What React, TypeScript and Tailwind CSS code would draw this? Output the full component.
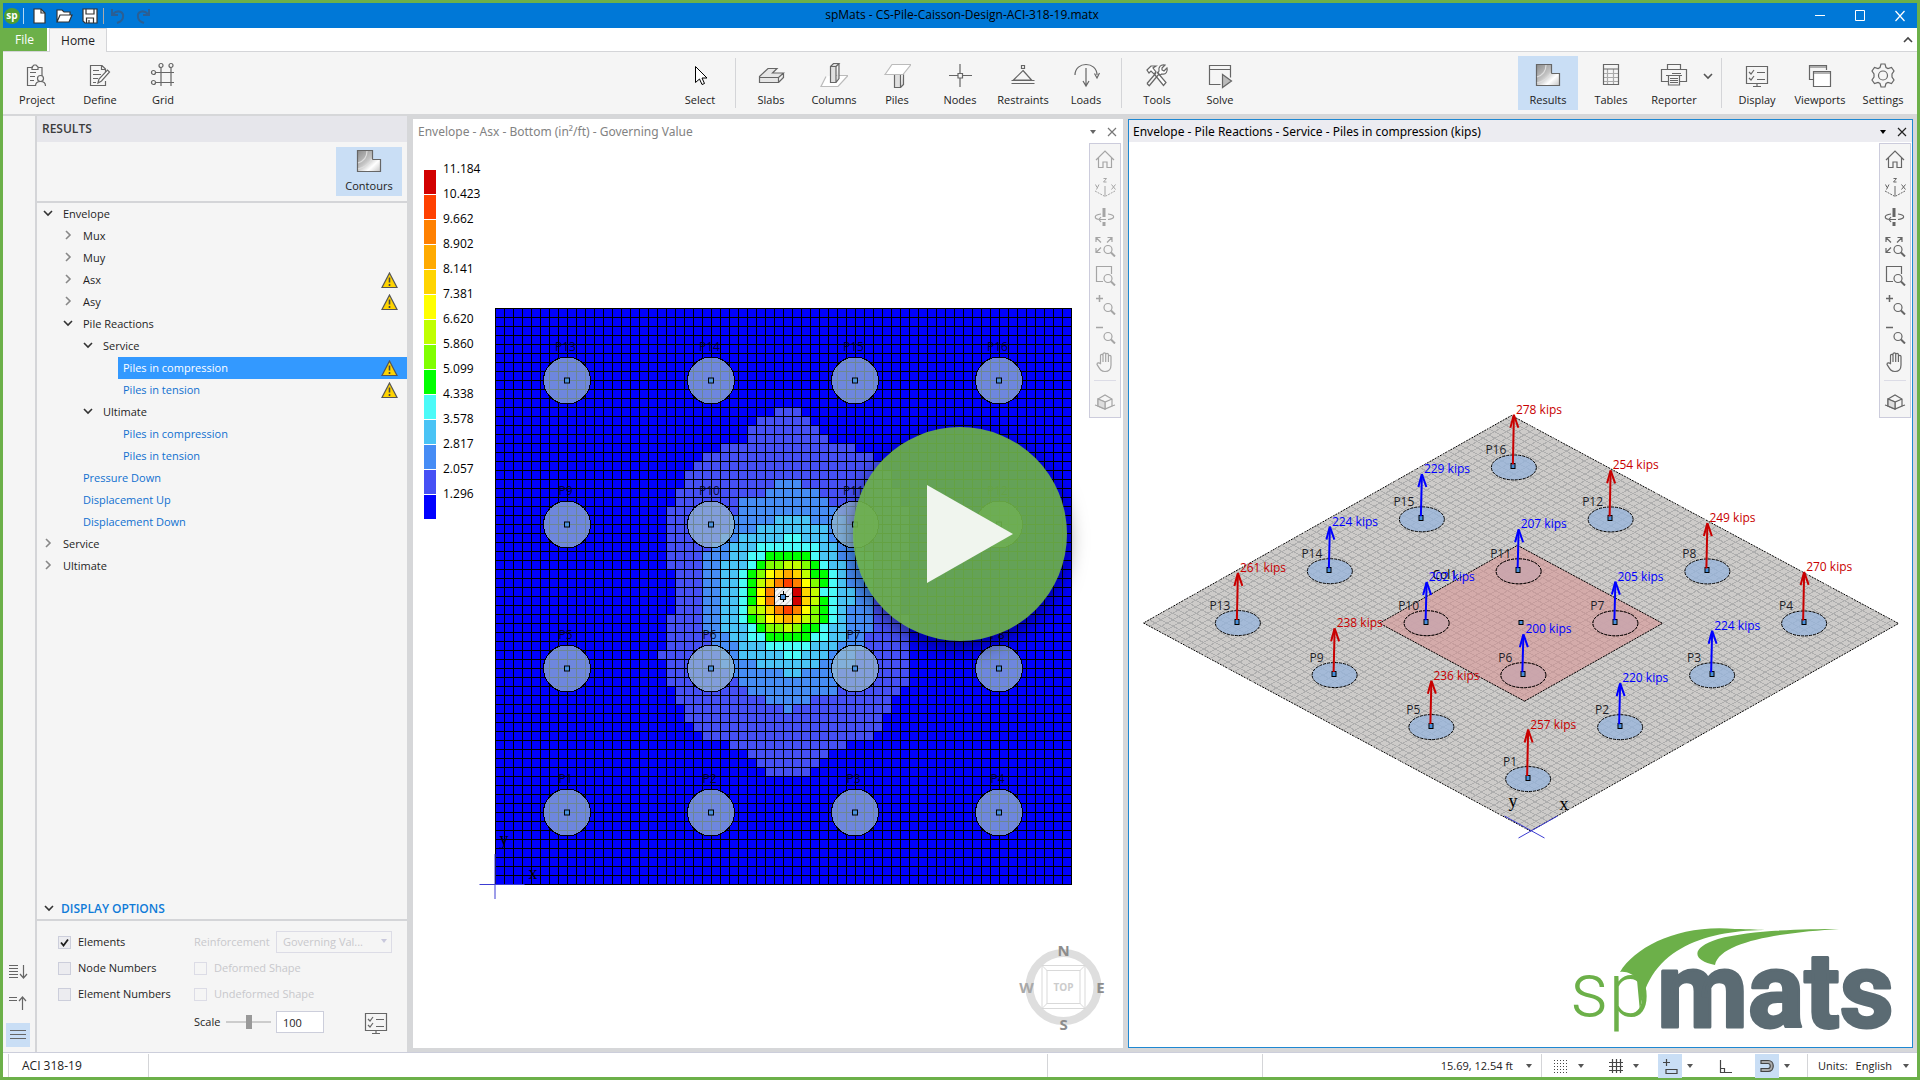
import { useState } from "react";
import type { ReactNode } from "react";

/* ---------- data ---------- */

const LEGEND = [
  { value: "11.184", color: "#d20000" },
  { value: "10.423", color: "#ff4000" },
  { value: "9.662", color: "#ff8000" },
  { value: "8.902", color: "#ffaa00" },
  { value: "8.141", color: "#ffd400" },
  { value: "7.381", color: "#ffff00" },
  { value: "6.620", color: "#bfff00" },
  { value: "5.860", color: "#80ff00" },
  { value: "5.099", color: "#00ff00" },
  { value: "4.338", color: "#4bfaf8" },
  { value: "3.578", color: "#4ac3f5" },
  { value: "2.817", color: "#468cf5" },
  { value: "2.057", color: "#4650f5" },
  { value: "1.296", color: "#0000ff" },
];

type Band = { color: string; row: number; spans: [number, number][] };

// each span is [first column, end column) of one mesh row, starting at `row`
const BANDS: Band[] = [
  {
    color: "#4650f5",
    row: 11,
    spans: [
      [31, 34], [29, 35], [28, 36], [28, 37], [25, 40], [23, 42], [22, 43], [21, 44], [21, 44],
      [20, 45], [20, 45], [19, 46], [19, 46], [19, 46], [19, 46], [19, 46], [19, 46], [19, 45],
      [20, 45], [20, 45], [20, 45], [20, 45], [20, 45], [19, 46], [19, 46], [19, 46], [19, 46],
      [18, 46], [19, 46], [19, 46], [19, 46], [20, 45], [20, 44], [21, 44], [21, 43], [22, 43],
      [23, 42], [26, 39], [28, 37], [29, 36], [30, 35],
    ],
  },
  {
    color: "#468cf5",
    row: 19,
    spans: [
      [31, 34], [30, 36], [27, 37], [27, 38], [26, 39], [26, 40], [25, 40], [24, 41], [23, 42],
      [23, 42], [23, 42], [23, 42], [23, 42], [23, 42], [23, 42], [23, 42], [23, 42], [24, 41],
      [24, 41], [25, 40], [25, 40], [26, 38], [27, 38], [28, 38], [30, 35], [32, 33],
    ],
  },
  {
    color: "#4ac3f5",
    row: 23,
    spans: [
      [31, 35], [29, 37], [27, 37], [26, 38], [26, 38], [25, 39], [25, 39], [25, 39], [25, 40],
      [25, 40], [25, 39], [25, 39], [25, 39], [26, 39], [27, 38], [27, 37], [29, 36], [32, 34],
    ],
  },
  {
    color: "#4bfaf8",
    row: 25,
    spans: [
      [32, 34], [29, 36], [28, 36], [28, 37], [27, 38], [27, 38], [27, 38], [27, 38], [27, 38],
      [27, 38], [28, 37], [28, 37], [30, 35], [32, 34],
    ],
  },
];

// cells around the column, rows 27-36 and columns 28-36
const CORE = [
  "..ggggg..",
  ".gllyylg.",
  "glYoOoygg",
  "gyorRrYlg",
  "gYrwwXoy.",
  "gYrwwXoyg",
  "lyorRrYlg",
  "glYoOoylg",
  ".gllylgg.",
  "..ggggg..",
];
const CORE_COLORS: Record<string, string> = {
  g: "#00ff00",
  l: "#80ff00",
  y: "#bfff00",
  Y: "#ffff00",
  o: "#ffd400",
  O: "#ffaa00",
  r: "#ff8000",
  R: "#ff4000",
  X: "#d20000",
  w: "#f5f5f5",
};

// kips for P1..P16, row by row from the origin
const REACTIONS = [257, 220, 224, 270, 236, 200, 205, 249, 238, 202, 207, 254, 261, 224, 229, 278];

type TreeRow = { label: string; depth: number; open?: boolean; link?: boolean; warn?: boolean };

const TREE: TreeRow[] = [
  { label: "Envelope", depth: 0, open: true },
  { label: "Mux", depth: 1, open: false },
  { label: "Muy", depth: 1, open: false },
  { label: "Asx", depth: 1, open: false, warn: true },
  { label: "Asy", depth: 1, open: false, warn: true },
  { label: "Pile Reactions", depth: 1, open: true },
  { label: "Service", depth: 2, open: true },
  { label: "Piles in compression", depth: 3, link: true, warn: true },
  { label: "Piles in tension", depth: 3, link: true, warn: true },
  { label: "Ultimate", depth: 2, open: true },
  { label: "Piles in compression", depth: 3, link: true },
  { label: "Piles in tension", depth: 3, link: true },
  { label: "Pressure Down", depth: 1, link: true },
  { label: "Displacement Up", depth: 1, link: true },
  { label: "Displacement Down", depth: 1, link: true },
  { label: "Service", depth: 0, open: false },
  { label: "Ultimate", depth: 0, open: false },
];
const INDENT = ["pl-1", "pl-6", "pl-11", "pl-16"];

/* ---------- icons ---------- */

function Icon({ children, size = 28, color = "#666" }: { children: ReactNode; size?: number; color?: string }) {
  return (
    <svg width={size} height={size} viewBox={`0 0 ${size} ${size}`} fill="none" stroke={color} strokeWidth="1.2" aria-hidden="true" className="shrink-0">
      {children}
    </svg>
  );
}

function Chevron({ dir, color = "#333" }: { dir: "down" | "right" | "up"; color?: string }) {
  const d = dir === "down" ? "M3 4l4 4 4-4" : dir === "up" ? "M3 9l4-4 4 4" : "M5 2l4 4-4 4";
  return (
    <Icon size={14} color={color}>
      <path d={d} strokeWidth="1.6" />
    </Icon>
  );
}

function Caret({ color = "#555" }: { color?: string }) {
  return (
    <svg width="8" height="8" viewBox="0 0 8 8" aria-hidden="true" className="shrink-0">
      <path d="M1 2h6L4 6z" fill={color} />
    </svg>
  );
}

function Warning() {
  return (
    <svg width="17" height="17" viewBox="0 0 17 17" aria-hidden="true" className="shrink-0">
      <path d="M8.500 1L16 15.500H1z" fill="#ffd400" stroke="#555" strokeWidth="1.200" />
      <path d="M8.500 5.500v5M8.500 12v2" stroke="#444" strokeWidth="1.600" />
    </svg>
  );
}

const contourIcon = (
  <Icon>
    <defs>
      <linearGradient id="steel" x1="0" y1="0" x2="1" y2="1">
        <stop offset="0" stopColor="#8c8c8c" />
        <stop offset="0.45" stopColor="#c4c4c4" />
        <stop offset="0.7" stopColor="#fff" />
        <stop offset="1" stopColor="#c4c4c4" />
      </linearGradient>
    </defs>
    <path d="M2.500 3.500h15v9h8v12h-23z" fill="url(#steel)" />
    <path d="M12 4c0 6-3 10-9 12M17 12c-2 4-7 8-14 10" stroke="#ddd" />
  </Icon>
);

const displayIcon = (
  <Icon>
    <path d="M3.500 5.500h21v17h-21zM10 25.500h8M14 23v2" />
    <path d="M6 11l2 2 3-4M6 17l2 2 3-4M14 11.500h8M14 18.500h8" />
  </Icon>
);

const RIBBON_ICONS: Record<string, ReactNode> = {
  Project: (
    <Icon>
      <path d="M10 6.500H4.500v18H13M15 6.500h4V15M9 8.500V6l2-2h2l2 2v2.500zM7 11.500h6M7 15.500h5M7 19.500h4" />
      <circle cx="17.500" cy="17.500" r="3" />
      <path d="M12.500 25c0-3 2-4.500 5-4.500s5 1.500 5 4.500" />
    </Icon>
  ),
  Define: (
    <Icon>
      <path d="M19.500 20v4.500h-15v-20H16l3.500 3.500v3M15.500 4.500v4h4M7 9.500h6M7 13.500h8M7 17.500h5M7 21.500h3" />
      <path d="M12 22l1-4 8.500-9 2 2-8 9z" fill="#fff" />
    </Icon>
  ),
  Grid: (
    <Icon>
      <path d="M6.500 11.500H25M6.500 21.500H25M12 6.500V25M22 6.500V25" />
      <circle cx="12" cy="4.500" r="2" />
      <circle cx="22" cy="4.500" r="2" />
      <circle cx="4.500" cy="11.500" r="2" />
      <circle cx="4.500" cy="21.500" r="2" />
    </Icon>
  ),
  Select: (
    <Icon color="#000">
      <path d="M9.500 5.500v16l4-3.500 2.500 5.500 2.500-1-2.500-5.500h5z" fill="#fff" strokeWidth="1" />
    </Icon>
  ),
  Slabs: (
    <Icon>
      <path d="M2.500 15.500L11 7.500h9l-4.500 4.500h11l-5 4.500v5h-19z M2.500 16.500h19M26.500 12v4.500l-5 5" fill="#e6e6e6" />
    </Icon>
  ),
  Columns: (
    <Icon>
      <path d="M6 15.500L1 25.500h17l10-11H14" stroke="#bbb" fill="#fff" />
      <path d="M10.500 5.500h5.500v16h-5.500zM10.500 5.500l3-3H19l-3 3M19 2.500v15l-3 4" fill="#e0e0e0" />
    </Icon>
  ),
  Piles: (
    <Icon>
      <path d="M11.500 12.500h6v14h-6zM17.500 26.500l3-3v-11" fill="#e0e0e0" />
      <path d="M2 13.500l7-10h19l-8 10z" stroke="#bbb" fill="#fff" />
    </Icon>
  ),
  Nodes: (
    <Icon>
      <path d="M14 3v9M14 17v9M3 14.500h9M16.500 14.500H26M12 12.500h4.500V17H12z" />
    </Icon>
  ),
  Restraints: (
    <Icon>
      <path d="M12.500 4.500h3v3h-3zM14 9.500L22.500 19h-18zM2.500 19.500h23M2.500 22.500h23" />
    </Icon>
  ),
  Loads: (
    <Icon>
      <path d="M3 14C3 0 25 0 25 14M14 7v17M11 20l3 5 3-5M22.500 12.500l2.500 4.500 2.500-5" />
    </Icon>
  ),
  Tools: (
    <Icon>
      <path d="M6 25l10-12M4 22.500l9-10.500M4 22.500L6.500 25M14 11l9 10.500-2.500 3L12 14" fill="#fff" />
      <path d="M4 9l4-4h5l-3 2 3 4-2 2-3-3-2 2zM24 7l-3 3-2-1V7l3-3c-4-1-7 2-6 6l-1 2 2 2 2-1c4 1 6-3 5-6z" fill="#fff" />
    </Icon>
  ),
  Solve: (
    <Icon>
      <path d="M14.500 23.500h-11v-19h21v12M3.500 8.500h21" />
      <path d="M16.500 13.500v13l9-6.500z" fill="#bbb" />
    </Icon>
  ),
  Results: contourIcon,
  Tables: (
    <Icon>
      <path d="M10.500 8v15M16.500 8v15M6 12.500h16M6 16.500h16M6 20.500h16" stroke="#aaa" />
      <path d="M6.500 3.500h15v20h-15zM6.500 8h15" />
    </Icon>
  ),
  Reporter: (
    <Icon>
      <path d="M7.500 8.500v-5h13v5M8 20.500H1.500v-12h25v12H20M6 14.500h16M12 12.500h9" />
      <path d="M8.500 14.500h11v9.500h-11zM10 17.500h8M10 19.500h8M10 21.500h8" />
    </Icon>
  ),
  Display: displayIcon,
  Viewports: (
    <Icon>
      <path d="M7 18.500H3.500v-14h17V9M3.500 6h17" />
      <path d="M7.500 10.500h17v15h-17zM7.500 12h17" fill="#fff" />
    </Icon>
  ),
  Settings: (
    <Icon>
      <path d="M12 3h4l1 3.500 2 1 3.500-1 2.500 3.500-2 3v3l2 3-2.500 3.500-3.500-1-2 1-1 3.500h-4l-1-3.500-2-1-3.500 1L3 19l2-3v-3l-2-3 2.500-3.500 3.500 1 2-1z" />
      <circle cx="14" cy="14.500" r="4.500" />
    </Icon>
  ),
};

const magnifier = (
  <>
    <circle cx="14" cy="14.500" r="4" />
    <path d="M17 17.500l4 4" strokeWidth="2" />
  </>
);

const VIEW_TOOLS: { name: string; icon: ReactNode }[] = [
  { name: "Home view", icon: <path d="M2 12l9-9 9 9M4.500 10v9.500h4.500V14h4v5.500h4.500V10" /> },
  {
    name: "Axes",
    icon: (
      <>
        <path d="M9.500 1.500h3L9.500 5h3M1.500 7.500L3 10.500M5 7.500L2.500 12.500M17.500 7.500l4 5M21.500 7.500l-4 5M11 9v10" strokeWidth="1" />
        <path d="M1 14l10 5.500L21 14" strokeDasharray="2 1" strokeWidth="1" />
      </>
    ),
  },
  {
    name: "Rotate",
    icon: (
      <>
        <path d="M10 2v9M10 16v4" strokeWidth="3" />
        <path d="M7 8C-1 9 0 13 6 13.500h6M14 8c8 1 7 5 0 5.500M7 11l-2 2.500L7 16" />
      </>
    ),
  },
  {
    name: "Zoom extents",
    icon: (
      <>
        <path d="M2 7V2.500h4.500M2 2.500l5 5M18 7V2.500h-4.500M18 2.500l-5 5M2 13v4.500h4.500M2 17.500l5-5" />
        {magnifier}
      </>
    ),
  },
  {
    name: "Zoom window",
    icon: (
      <>
        <path d="M9 17.500H2.500v-15h15V10" />
        {magnifier}
      </>
    ),
  },
  {
    name: "Zoom in",
    icon: (
      <>
        <path d="M2 5.500h7M5.500 2v7" strokeWidth="1.500" />
        {magnifier}
      </>
    ),
  },
  {
    name: "Zoom out",
    icon: (
      <>
        <path d="M2 5.500h7" strokeWidth="1.500" />
        {magnifier}
      </>
    ),
  },
  {
    name: "Pan",
    icon: (
      <path d="M6.500 12V4.500c0-1.500 2.500-1.500 2.500 0V11V3c0-1.500 2.700-1.500 2.700 0v8V3.500c0-1.500 2.700-1.500 2.700 0V11V5.500c0-1.500 2.600-1.500 2.600 0V14c0 4-2 6.500-6 6.500-4 0-5-2-8-7 0-2 2-2 4-.5" />
    ),
  },
];

/* ---------- ribbon ---------- */

function RibbonButton({ name, active = false }: { name: string; active?: boolean }) {
  return (
    <button
      type="button"
      aria-pressed={active}
      className={
        "flex h-[54px] w-[60px] flex-col items-center gap-[3px] whitespace-nowrap pt-[5px] text-[11px] leading-4 text-[#222] " +
        (active ? "bg-[#c9def5]" : "hover:bg-[#e3ecf7]")
      }
    >
      {RIBBON_ICONS[name]}
      {name}
    </button>
  );
}

function Divider() {
  return <div className="mx-[2px] h-[50px] w-px bg-[#d4d5d8]" />;
}

function TitleBar() {
  return (
    <header className="grid h-[25px] grid-cols-[1fr_auto_1fr] items-center bg-[#0078d7] text-black">
      <div className="flex items-center pl-px">
        <span className="flex h-4 w-4 items-center justify-center rounded-full bg-[#4f9e2f] pb-[2px] text-[10px] leading-none font-bold text-white">sp</span>
        <span className="mx-[3px] h-4 w-px bg-white/70" />
        <button type="button" aria-label="New" className="flex w-[25px] justify-center">
          <Icon size={18} color="#333"><path d="M3 2h7l4 4v10H3z" fill="#fff" /><path d="M10 2v4h4" /></Icon>
        </button>
        <button type="button" aria-label="Open" className="flex w-[25px] justify-center">
          <Icon size={18} color="#333"><path d="M1 15V3h5l2 2h6v3M1 15L4 8h12l-3 7z" fill="#fff" /></Icon>
        </button>
        <button type="button" aria-label="Save" className="flex w-[25px] justify-center">
          <Icon size={18} color="#333"><path d="M2 2h14v14H4l-2-2z" fill="#fff" /><path d="M5 2v5h8V2M5.500 16v-5h7v5M8 13v3" /></Icon>
        </button>
        <span className="mx-px h-4 w-px bg-[#aaa]" />
        <button type="button" aria-label="Undo" className="flex w-[25px] justify-center">
          <Icon size={18} color="#2a5f94"><path d="M3 2v6h6M4 7c5-5 11-2 10 3 0 3-3 5-6 6" strokeWidth="2" /></Icon>
        </button>
        <button type="button" aria-label="Redo" className="flex w-[25px] justify-center">
          <Icon size={18} color="#2a5f94"><path d="M15 2v6H9M14 7C9 2 3 5 4 10c0 3 3 5 6 6" strokeWidth="2" /></Icon>
        </button>
      </div>
      <h1 className="pb-px pl-1 text-xs">spMats - CS-Pile-Caisson-Design-ACI-318-19.matx</h1>
      <div className="flex items-center justify-end gap-[6px]">
        <button type="button" aria-label="Minimize" className="flex w-[34px] justify-center"><Icon size={14} color="#fff"><path d="M2 6.500h10" strokeWidth="1" /></Icon></button>
        <button type="button" aria-label="Maximize" className="flex w-[34px] justify-center"><Icon size={14} color="#fff"><path d="M2.500 1.500h9v10h-9z" strokeWidth="1" /></Icon></button>
        <button type="button" aria-label="Close" className="flex w-[34px] justify-center"><Icon size={14} color="#fff"><path d="M2.500 2l9 10M11.500 2l-9 10" /></Icon></button>
      </div>
    </header>
  );
}

function Ribbon() {
  return (
    <>
      <nav className="flex h-6 border-b border-[#d4d5d8] bg-white">
        <button type="button" className="w-[44px] bg-[#6cb049] pr-px text-white">File</button>
        <button type="button" className="-mb-px ml-[2px] w-[58px] border border-b-0 border-[#d4d5d8] bg-[#f5f5f5] text-[#222]">Home</button>
        <button type="button" aria-label="Collapse ribbon" className="ml-auto pr-[2px]"><Chevron dir="up" color="#444" /></button>
      </nav>
      <div className="grid h-[62px] shrink-0 grid-cols-[1fr_auto_1fr] items-center bg-[#f5f5f5] px-1">
        <div className="flex items-center gap-[3px]">
          <RibbonButton name="Project" />
          <RibbonButton name="Define" />
          <RibbonButton name="Grid" />
        </div>
        <div className="flex items-center gap-[3px]">
          <RibbonButton name="Select" />
          <Divider />
          <RibbonButton name="Slabs" />
          <RibbonButton name="Columns" />
          <RibbonButton name="Piles" />
          <RibbonButton name="Nodes" />
          <RibbonButton name="Restraints" />
          <RibbonButton name="Loads" />
          <Divider />
          <RibbonButton name="Tools" />
          <RibbonButton name="Solve" />
        </div>
        <div className="flex items-center justify-end gap-[3px]">
          <RibbonButton name="Results" active />
          <RibbonButton name="Tables" />
          <div className="flex">
            <RibbonButton name="Reporter" />
            <button type="button" aria-label="Reporter options" className="flex w-3 items-center justify-center pr-[4px] pb-[12px]"><Chevron dir="down" color="#555" /></button>
          </div>
          <Divider />
          <RibbonButton name="Display" />
          <RibbonButton name="Viewports" />
          <RibbonButton name="Settings" />
        </div>
      </div>
    </>
  );
}

/* ---------- left panel ---------- */

function LeftRail() {
  return (
    <div className="flex w-[32px] shrink-0 flex-col items-center justify-end gap-2 bg-[#f5f5f5] pr-[2px] pb-[5px]">
      <button type="button" aria-label="Expand all" className="flex h-6 w-6 items-center justify-center">
        <Icon size={20}><path d="M1 4.500h9M1 7.500h9M1 10.500h9M1 13.500h9M1 16.500h9M15.500 4v13M12 13l3.500 4 3.500-4" /></Icon>
      </button>
      <button type="button" aria-label="Collapse all" className="flex h-6 w-6 items-center justify-center">
        <Icon size={20}><path d="M1 4.500h8M1 7.500h8M14.500 17V4M11 8l3.500-4 3.500 4" /></Icon>
      </button>
      <button type="button" aria-label="Tree view" className="flex h-6 w-6 items-center justify-center bg-[#c9def5]">
        <Icon size={20}><path d="M2 5.500h16M2 9.500h16M2 13.500h16" /></Icon>
      </button>
    </div>
  );
}

function Check({ label, checked = false, disabled = false }: { label: string; checked?: boolean; disabled?: boolean }) {
  const [on, setOn] = useState(checked);
  return (
    <label className={"flex h-[26px] items-center gap-[7px] whitespace-nowrap " + (disabled ? "text-[#c8c8cc]" : "text-[#1e1e1e]")}>
      <span className="relative h-[13px] w-[13px]">
        <input
          type="checkbox"
          checked={on}
          disabled={disabled}
          onChange={() => setOn(!on)}
          className="block h-[13px] w-[13px] appearance-none border border-[#cccedb] bg-[#ececf0] disabled:border-[#dcdce6] disabled:bg-[#f5f5f5]"
        />
        {on && (
          <svg viewBox="0 0 13 13" className="pointer-events-none absolute inset-0" fill="none" stroke="#1e1e1e" strokeWidth="1.8" aria-hidden="true">
            <path d="M3 6.500l2.500 3L10 3.500" />
          </svg>
        )}
      </span>
      <span className="pt-px">{label}</span>
    </label>
  );
}

function ResultsPanel() {
  const [selected, setSelected] = useState(7);
  const [scale, setScale] = useState(100);
  return (
    <aside className="flex w-[372px] shrink-0 flex-col border-l-2 border-[#d4d5d8] bg-[#f5f5f5] text-[11px]">
      <h2 className="h-[26px] bg-[#e6e6eb] pl-[5px] text-xs leading-[26px] font-semibold text-[#3c3c3c]">RESULTS</h2>
      <div className="flex h-[61px] justify-end border-b-2 border-[#d4d5d8] pt-[5px] pr-[5px]">
        <button type="button" className="flex h-[49px] w-[66px] flex-col items-center bg-[#c9def5] leading-4 text-[#222]">
          {contourIcon}
          <span className="mt-[3px]">Contours</span>
        </button>
      </div>
      <ul>
        {TREE.map((row, i) => {
          const isSelected = i === selected;
          return (
            <li key={i} className={"flex h-[22px] items-center pr-[10px] " + INDENT[row.depth]}>
              {row.open !== undefined ? (
                <button type="button" aria-label={"Toggle " + row.label} className="pb-px">
                  <Chevron dir={row.open ? "down" : "right"} color={row.open ? "#333" : "#888"} />
                </button>
              ) : (
                <span className="w-[14px]" />
              )}
              <span
                className={
                  "-mr-[10px] ml-[3px] flex h-full flex-1 items-center justify-between pr-[9px] pl-[5px] " +
                  (isSelected ? "bg-[#3399ff] text-white" : row.link ? "text-[#1070d0]" : "text-[#1e1e1e]")
                }
              >
                {row.link ? (
                  <a href="#" onClick={() => setSelected(i)} className="pt-px">
                    {row.label}
                  </a>
                ) : (
                  <span className="pt-px">{row.label}</span>
                )}
                {row.warn && <Warning />}
              </span>
            </li>
          );
        })}
      </ul>

      <section className="mt-auto">
        <h3 className="flex h-[24px] items-center gap-[5px] border-b-2 border-[#d4d5d8] pt-[2px] pl-[5px] text-xs font-semibold text-[#0f7bd8]">
          <Chevron dir="down" />
          DISPLAY OPTIONS
        </h3>
        <div className="flex h-[131px] pt-2 pl-[21px]">
          <div className="w-[136px]">
            <Check label="Elements" checked />
            <Check label="Node Numbers" />
            <Check label="Element Numbers" />
          </div>
          <div>
            <div className="flex h-[26px] items-center text-[#c8c8cc]">
              <label htmlFor="reinforcement" className="w-[82px] pt-px">Reinforcement</label>
              <span className="relative">
                <select id="reinforcement" disabled className="block h-[22px] w-[116px] appearance-none border border-[#dcdce6] bg-transparent pl-[6px] opacity-100">
                  <option>Governing Val...</option>
                </select>
                <span className="pointer-events-none absolute top-[6px] right-[4px]"><Caret color="#c8c8dc" /></span>
              </span>
            </div>
            <Check label="Deformed Shape" disabled />
            <Check label="Undeformed Shape" disabled />
            <div className="flex h-[30px] items-center text-[#1e1e1e]">
              <label htmlFor="scale" className="w-[32px] pt-px">Scale</label>
              <input
                type="range"
                aria-label="Scale slider"
                min={0}
                max={200}
                value={scale}
                onChange={(e) => setScale(Number(e.target.value))}
                className="h-[14px] w-[45px] appearance-none bg-transparent [&::-webkit-slider-runnable-track]:h-[2px] [&::-webkit-slider-runnable-track]:bg-[#ccc] [&::-webkit-slider-thumb]:-mt-[6px] [&::-webkit-slider-thumb]:h-[14px] [&::-webkit-slider-thumb]:w-[6px] [&::-webkit-slider-thumb]:appearance-none [&::-webkit-slider-thumb]:bg-[#999]"
              />
              <input
                id="scale"
                value={scale}
                onChange={(e) => setScale(Number(e.target.value) || 0)}
                className="ml-[5px] h-[22px] w-[48px] border border-[#cccedb] bg-white pl-[6px]"
              />
              <button type="button" aria-label="Display settings" className="ml-[38px]">{displayIcon}</button>
            </div>
          </div>
        </div>
      </section>
    </aside>
  );
}

/* ---------- viewports ---------- */

function ViewToolbar({ dim }: { dim: boolean }) {
  const color = dim ? "#a5a5a5" : "#666";
  return (
    <div className="absolute top-px right-px flex w-[32px] flex-col items-center gap-[7px] border border-[#ccccdc] bg-[#f5f5f5] pt-[4px] pb-[4px]">
      {VIEW_TOOLS.map((tool) => (
        <button key={tool.name} type="button" aria-label={tool.name}>
          <Icon size={22} color={color}>{tool.icon}</Icon>
        </button>
      ))}
      <span className="h-px w-[22px] bg-[#dcdce6]" />
      <button type="button" aria-label="Isometric view" className="pt-[3px]">
        <Icon size={22} color={color}>
          <path d="M4 8l7-4 7 4v7l-7 3-7-3zM4 8l7 3 7-3M11 11v7" />
          <path d="M4 8l7 3v7l-7-3z" fill="#ddd" />
          <path d="M1 14l3 1M18 15l3-1" />
        </Icon>
      </button>
    </div>
  );
}

function Viewport({ title, active = false, children }: { title: ReactNode; active?: boolean; children: ReactNode }) {
  return (
    <section className={"flex min-w-0 flex-col border bg-white " + (active ? "border-[#1e88d2]" : "border-white")}>
      <div className={"flex h-[22px] shrink-0 items-center pt-px pl-[4px] " + (active ? "bg-[#ececf1] text-black" : "text-[#828282]")}>
        <h2 className="truncate font-['Noto_Sans']">{title}</h2>
        <button type="button" aria-label="Viewport menu" className="ml-auto"><Caret color={active ? "#000" : "#666"} /></button>
        <button type="button" aria-label="Close viewport" className="mr-[3px] ml-2">
          <Icon size={14} color={active ? "#222" : "#777"}><path d="M3 3l8 8M11 3l-8 8" /></Icon>
        </button>
      </div>
      <div className="relative flex-1">
        {children}
        <ViewToolbar dim={!active} />
      </div>
    </section>
  );
}

function ContourPlot() {
  const cell = 9;
  const size = cell * 64;
  const lines = Array.from({ length: 65 }, (_, i) => i * cell);
  const piles = Array.from({ length: 16 }, (_, i) => ({
    name: `P${i + 1}`,
    x: (8 + (i % 4) * 16) * cell,
    y: (56 - Math.floor(i / 4) * 16) * cell,
  }));

  return (
    <svg viewBox="0 0 707 905" className="absolute inset-0 h-full w-full" role="img" aria-label="Contour plot of required reinforcement">
      <defs>
        <pattern id="hatch" width="6" height="6" patternUnits="userSpaceOnUse">
          <path d="M0 6L6 0" stroke="#bbb" />
        </pattern>
      </defs>
      <g transform="translate(80 166)">
        <g shapeRendering="crispEdges">
          <rect width={size} height={size} fill="#0000ff" />
          {BANDS.map((band) =>
            band.spans.map(([from, to], i) => (
              <rect
                key={band.color + i}
                x={from * cell}
                y={(band.row + i) * cell}
                width={(to - from) * cell}
                height={cell}
                fill={band.color}
              />
            ))
          )}
          {CORE.map((row, r) =>
            [...row].map((ch, c) =>
              ch === "." ? null : (
                <rect key={`${r}-${c}`} x={(28 + c) * cell} y={(27 + r) * cell} width={cell} height={cell} fill={CORE_COLORS[ch]} />
              )
            )
          )}
          {lines.map((p) => (
            <path key={p} d={`M${p}.5 0V${size + 1}M0 ${p}.5H${size + 1}`} stroke="#000" />
          ))}
          {/* column */}
          <rect x={31 * cell + 1} y={31 * cell + 1} width="17" height="17" fill="#f5f5f5" />
          <rect x={31 * cell + 1} y={31 * cell + 1} width="17" height="17" fill="url(#hatch)" />
          <path d={`M${32 * cell}.5 ${31 * cell + 4}v11M${31 * cell + 4} ${32 * cell}.5h11`} stroke="#000" />
          <rect x={32 * cell - 2} y={32 * cell - 2} width="5" height="5" fill="#4a90d9" stroke="#000" />
        </g>
        {piles.map((p) => (
          <g key={p.name}>
            <circle cx={p.x + 0.5} cy={p.y + 0.5} r="23.5" fill="#9bbed0" fillOpacity="0.71" />
            <circle cx={p.x + 0.5} cy={p.y + 0.5} r="23.5" fill="none" stroke="#000" shapeRendering="crispEdges" />
            <rect x={p.x - 2} y={p.y - 2} width="5" height="5" fill="#4a90d9" stroke="#000" />
            <text x={p.x - 1} y={p.y - 29} textAnchor="middle" fill="#000014" fillOpacity="0.9">
              {p.name}
            </text>
          </g>
        ))}
        <path d={`M-15 ${size}.5H30M0.5 ${size - 30}v45`} stroke="#3c3cd2" />
        <text x="5" y={size - 39} className="font-['Liberation_Serif'] text-lg">y</text>
        <text x="34" y={size - 5} className="font-['Liberation_Serif'] text-lg">x</text>
      </g>
      {/* view cube */}
      <g transform="translate(649 845)" textAnchor="middle" className="font-bold">
        <circle r="34" fill="none" stroke="#dedede" strokeWidth="8" />
        <g fill="#fff" stroke="#d9d9d9">
          <rect x="-21.5" y="-21.5" width="43" height="43" />
          <rect x="-16.500" y="-16.500" width="33" height="33" />
          <path d="M-21-21l5 5M21-21l-5 5M-21 21l5-5M21 21l-5-5" />
        </g>
        <text y="4" fill="#cccccc" className="text-[10px]">TOP</text>
        <g fill="#8c8c8c" className="text-[15px]">
          <text y="-31">N</text>
          <text y="43">S</text>
          <text x="37" y="6">E</text>
          <text x="-37" y="6" fill="#a8a8a8">W</text>
        </g>
      </g>
    </svg>
  );
}

function Legend() {
  return (
    <ul className="absolute top-[14px] left-[10px]">
      {LEGEND.map((item) => (
        <li key={item.value} className="flex h-[25px] gap-[7px] leading-[25px] text-black">
          <span className="mt-[14px] h-6 w-3" style={{ backgroundColor: item.color }} />
          {item.value}
        </li>
      ))}
    </ul>
  );
}

function ReactionPlot() {
  // affine map from slab fractions to the isometric view
  const px = (a: number, b: number) => 401 + a * 368 - b * 387;
  const py = (a: number, b: number) => 689 - a * 207.5 - b * 208;
  const quad = (lo: number, hi: number) =>
    [[lo, lo], [hi, lo], [hi, hi], [lo, hi]].map(([a, b]) => `${px(a, b)},${py(a, b)}`).join(" ");
  const mesh = Array.from({ length: 63 }, (_, i) => (i + 1) / 64)
    .map((t) => `M${px(t, 0)} ${py(t, 0)}L${px(t, 1)} ${py(t, 1)}M${px(0, t)} ${py(0, t)}L${px(1, t)} ${py(1, t)}`)
    .join("");

  return (
    <svg viewBox="0 0 782 905" className="absolute inset-0 h-full w-full" role="img" aria-label="Pile reactions under service loads">
      <polygon points={quad(0, 1)} fill="#cdcbc9" stroke="#000" strokeDasharray="2 1" />
      <path d={mesh} stroke="#aeaeae" fill="none" shapeRendering="crispEdges" />
      {REACTIONS.map((_, i) => {
        const a = (1 + 2 * (i % 4)) / 8;
        const b = (1 + 2 * Math.floor(i / 4)) / 8;
        return (
          <ellipse key={i} cx={px(a, b)} cy={py(a, b)} rx="22.5" ry="12.5" fill="#96b4dc" fillOpacity="0.75" stroke="#000" strokeDasharray="3 1" />
        );
      })}
      <polygon points={quad(5 / 16, 11 / 16)} fill="#dc8c8c" fillOpacity="0.5" stroke="#000" strokeDasharray="2 1" />
      {[5, 6, 9, 10].map((i) => {
        const a = (1 + 2 * (i % 4)) / 8;
        const b = (1 + 2 * Math.floor(i / 4)) / 8;
        return <ellipse key={i} cx={px(a, b)} cy={py(a, b)} rx="22.5" ry="12.5" fill="#d2a8a8" fillOpacity="0.6" stroke="#000" strokeDasharray="3 1" />;
      })}
      <rect x="389.500" y="478.500" width="4" height="4" fill="#4a90d9" stroke="#000" />
      <text x="303" y="437" fill="#000">Col1</text>
      {REACTIONS.map((kips, i) => {
        const a = (1 + 2 * (i % 4)) / 8;
        const b = (1 + 2 * Math.floor(i / 4)) / 8;
        const x = px(a, b) - 1;
        const y = py(a, b);
        const tip = y - 11 - 0.15 * kips;
        const color = kips > 230 ? "#c80000" : "#0000ff";
        return (
          <g key={i}>
            <rect x={Math.round(x) - 1.5} y={Math.round(y) - 3.5} width="4" height="5" fill="#4a90d9" stroke="#000" />
            <path d={`M${x} ${y - 3}L${x + 1} ${tip + 1}`} stroke={color} strokeWidth="2" />
            <path d={`M${x + 1} ${tip}l-3.500 13M${x + 1} ${tip}l4.500 13`} stroke={color} strokeWidth="2" fill="none" />
            <text x={x - 17} y={y - 13} textAnchor="middle" fill="#1e1e28">{`P${i + 1}`}</text>
            <text x={x + 3} y={tip - 1} fill={color}>{`${kips} kips`}</text>
          </g>
        );
      })}
      <path d="M375 674l40 22M428 674l-39 22" stroke="#3c3cd2" />
      <text x="379" y="665" className="font-['Liberation_Serif'] text-lg">y</text>
      <text x="430" y="668" className="font-['Liberation_Serif'] text-lg">x</text>
    </svg>
  );
}

function BrandLogo() {
  return (
    <svg width="345" height="136" viewBox="0 0 345 136" className="absolute right-[7px] -bottom-[9px] overflow-visible" role="img" aria-label="spMats">
      <g fill="#6cb049">
        <path d="M60 52C76 26 120 4 175 9C190 9 200 10 208 10C150 10 88 26 80 92L77 60C74 54 66 51 60 52z" />
        <path d="M155 45C132 40 130 28 158 19C190 10 245 9 279 9C230 12 160 20 155 45z" />
        <text x="10" y="96" className="font-['Roboto'] text-[76px] font-light">sp</text>
      </g>
      <text x="97" y="107" fill="#5b6b73" stroke="#5b6b73" strokeWidth="3" strokeLinejoin="round" className="font-['Roboto'] text-[105px] font-bold">mats</text>
    </svg>
  );
}

/* ---------- status bar ---------- */

function StatusItem({ label, active = false, menu = true, children }: { label: string; active?: boolean; menu?: boolean; children: ReactNode }) {
  return (
    <div className="flex items-center gap-1">
      <button type="button" aria-label={label} className={"flex h-6 w-6 items-center justify-center " + (active ? "bg-[#c9def5]" : "")}>
        <Icon size={18} color="#444">{children}</Icon>
      </button>
      {menu && (
        <button type="button" aria-label={label + " options"}><Caret /></button>
      )}
    </div>
  );
}

function StatusBar() {
  return (
    <footer className="flex h-[25px] shrink-0 items-center border-t border-[#cccedb] bg-white pt-px text-[11px] text-[#222]">
      <div className="ml-[5px] flex h-full w-[141px] items-center border-x border-[#d4d5d8] pt-px pl-[13px] text-xs">ACI 318-19</div>
      <div className="h-full flex-1 border-r border-[#d4d5d8]" />
      <div className="h-full w-[215px] border-r border-[#d4d5d8]" />
      <div className="flex h-full w-[279px] items-center justify-end gap-3 border-r border-[#d4d5d8] pt-px pr-[8px]">
        15.69, 12.54 ft
        <Caret />
      </div>
      <div className="flex h-full w-[266px] items-center justify-between border-r border-[#d4d5d8] pr-[16px] pl-[7px]">
        <StatusItem label="Snap"><path d="M2 3.500h14M2 6.500h14M2 9.500h14M2 12.500h14M2 15.500h14" strokeDasharray="1 2" /></StatusItem>
        <StatusItem label="Grid"><path d="M2 5.500h14M2 9.500h14M2 13.500h14M5.500 2v14M9.500 2v14M13.500 2v14" /></StatusItem>
        <StatusItem label="Dynamic input" active><path d="M5.500 2v7M2 5.500h7M5 12.500h11v4H5z" /></StatusItem>
        <StatusItem label="Ortho" menu={false}><path d="M4.500 3v12.500H16M4.500 11.500h4v4" /></StatusItem>
        <StatusItem label="Object snap" active><path d="M3 3.500h7c7 0 7 11 0 11H3v-3h7c3 0 3-5 0-5H3z" fill="#aaa" /></StatusItem>
      </div>
      <div className="flex w-[109px] items-center pt-px pr-[7px] pl-[10px]">
        <span>Units:</span>
        <span className="pl-2">English</span>
        <span className="ml-auto"><Caret /></span>
      </div>
    </footer>
  );
}

export default function App() {
  return (
    <div className="relative flex min-h-screen flex-col border-[3px] border-[#6cb049] bg-[#d6d7d9] font-['Open_Sans',sans-serif] text-xs">
      <TitleBar />
      <Ribbon />
      <main className="flex flex-1 pt-[2px]">
        <LeftRail />
        <ResultsPanel />
        <div className="grid flex-1 grid-cols-[710fr_785fr] gap-[5px] pt-[3px] pr-1 pb-1 pl-[6px]">
          <Viewport title={<>Envelope - Asx - Bottom (in²/ft) - Governing Value</>}>
            <ContourPlot />
            <Legend />
          </Viewport>
          <Viewport title="Envelope - Pile Reactions - Service - Piles in compression (kips)" active>
            <ReactionPlot />
            <BrandLogo />
          </Viewport>
        </div>
      </main>
      <StatusBar />

      <button
        type="button"
        aria-label="Play video"
        className="absolute top-[424px] left-1/2 flex h-[214px] w-[214px] -translate-x-1/2 items-center justify-center rounded-full bg-[#6cb049]/92 shadow-[0_6px_20px_rgba(0,0,0,0.5)]"
      >
        <svg width="86" height="98" viewBox="0 0 86 98" className="ml-[20px]" aria-hidden="true">
          <path d="M0 0L86 49L0 98z" fill="#f0f5ee" />
        </svg>
      </button>
    </div>
  );
}
